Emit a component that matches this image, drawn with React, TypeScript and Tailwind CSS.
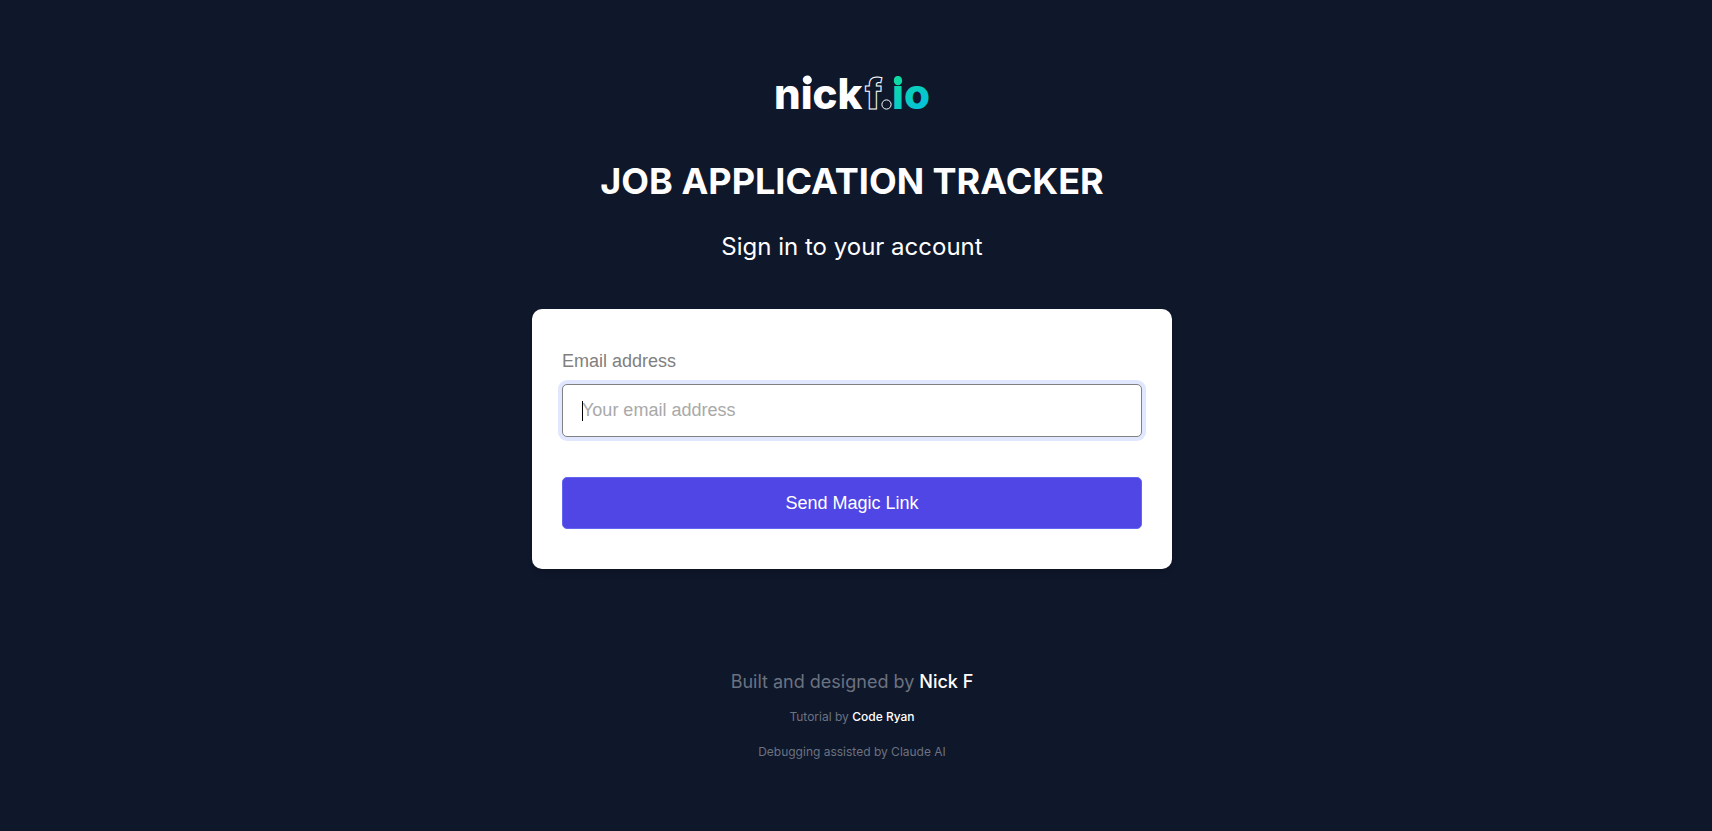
import { useState } from "react";

function Logo() {
  return (
    <svg
      viewBox="0 0 172 64"
      className="block h-16 w-[172px] overflow-visible font-[Inter,sans-serif] text-[42px] font-extrabold"
      role="img"
      aria-label="nickf.io"
    >
      <defs>
        <linearGradient id="logo-teal" gradientUnits="userSpaceOnUse" x1="128" y1="14" x2="158" y2="48">
          <stop offset="0" stopColor="#0fdc9b" />
          <stop offset="1" stopColor="#04bfe0" />
        </linearGradient>
      </defs>
      <text x="8" y="46" fill="#ffffff">nick</text>
      <circle cx="41.5" cy="17" r="4.4" fill="#ffffff" />
      <text x="99" y="46" fill="none" stroke="#ffffff" strokeWidth="1">f</text>
      <circle cx="120.5" cy="41.5" r="4.6" fill="#0f172a" stroke="#ffffff" strokeWidth="1" />
      <text x="126" y="46" fill="url(#logo-teal)">io</text>
      <circle cx="132" cy="18" r="4.2" fill="url(#logo-teal)" />
    </svg>
  );
}

export default function App() {
  const [email, setEmail] = useState("");

  return (
    <div className="flex min-h-screen flex-col items-center bg-[#0f172a] pt-[63px] pr-2 font-[Inter,sans-serif] text-white">
      <header className="flex flex-col items-center">
        <Logo />
        <h1 className="mt-[34px] text-center text-4xl leading-10 font-bold">
          JOB APPLICATION TRACKER
        </h1>
        <h2 className="mt-7 text-center text-2xl leading-9">Sign in to your account</h2>
      </header>

      <main className="mt-11 w-full max-w-[640px] rounded-[10px] bg-white px-[30px] py-10 font-['Liberation_Sans',Arial,sans-serif] text-lg shadow-md">
        <form onSubmit={(event) => event.preventDefault()} className="flex flex-col">
          <label htmlFor="email" className="leading-6 text-[#808080]">
            Email address
          </label>
          <div className="relative mt-[11px]">
            <input
              id="email"
              type="email"
              autoFocus
              value={email}
              onChange={(event) => setEmail(event.target.value)}
              placeholder="Your email address"
              className="block h-[53px] w-full rounded-[5px] border border-[#808080] bg-white px-[19px] text-black ring-4 ring-[#e0e7ff] outline-none placeholder:text-[#a9a9a9] placeholder-shown:caret-transparent"
            />
            {email === "" && (
              <span aria-hidden="true" className="pointer-events-none absolute top-[17px] left-5 h-5 w-px bg-black" />
            )}
          </div>
          <button
            type="submit"
            className="mt-10 h-[52px] w-full rounded-[5px] border border-[#6366f1] bg-[#4f46e5] text-white"
          >
            Send Magic Link
          </button>
        </form>
      </main>

      <footer className="mt-[101px] flex flex-col items-center gap-[11px] pb-10 text-[#6b7280]">
        <p className="text-lg leading-6">
          Built and designed by{" "}
          <a href="#nick" className="font-medium text-white">Nick F</a>
        </p>
        <p className="text-xs leading-6">
          Tutorial by{" "}
          <a href="#ryan" className="font-medium text-white">Code Ryan</a>
        </p>
        <p className="text-xs leading-6">Debugging assisted by Claude AI</p>
      </footer>
    </div>
  );
}
